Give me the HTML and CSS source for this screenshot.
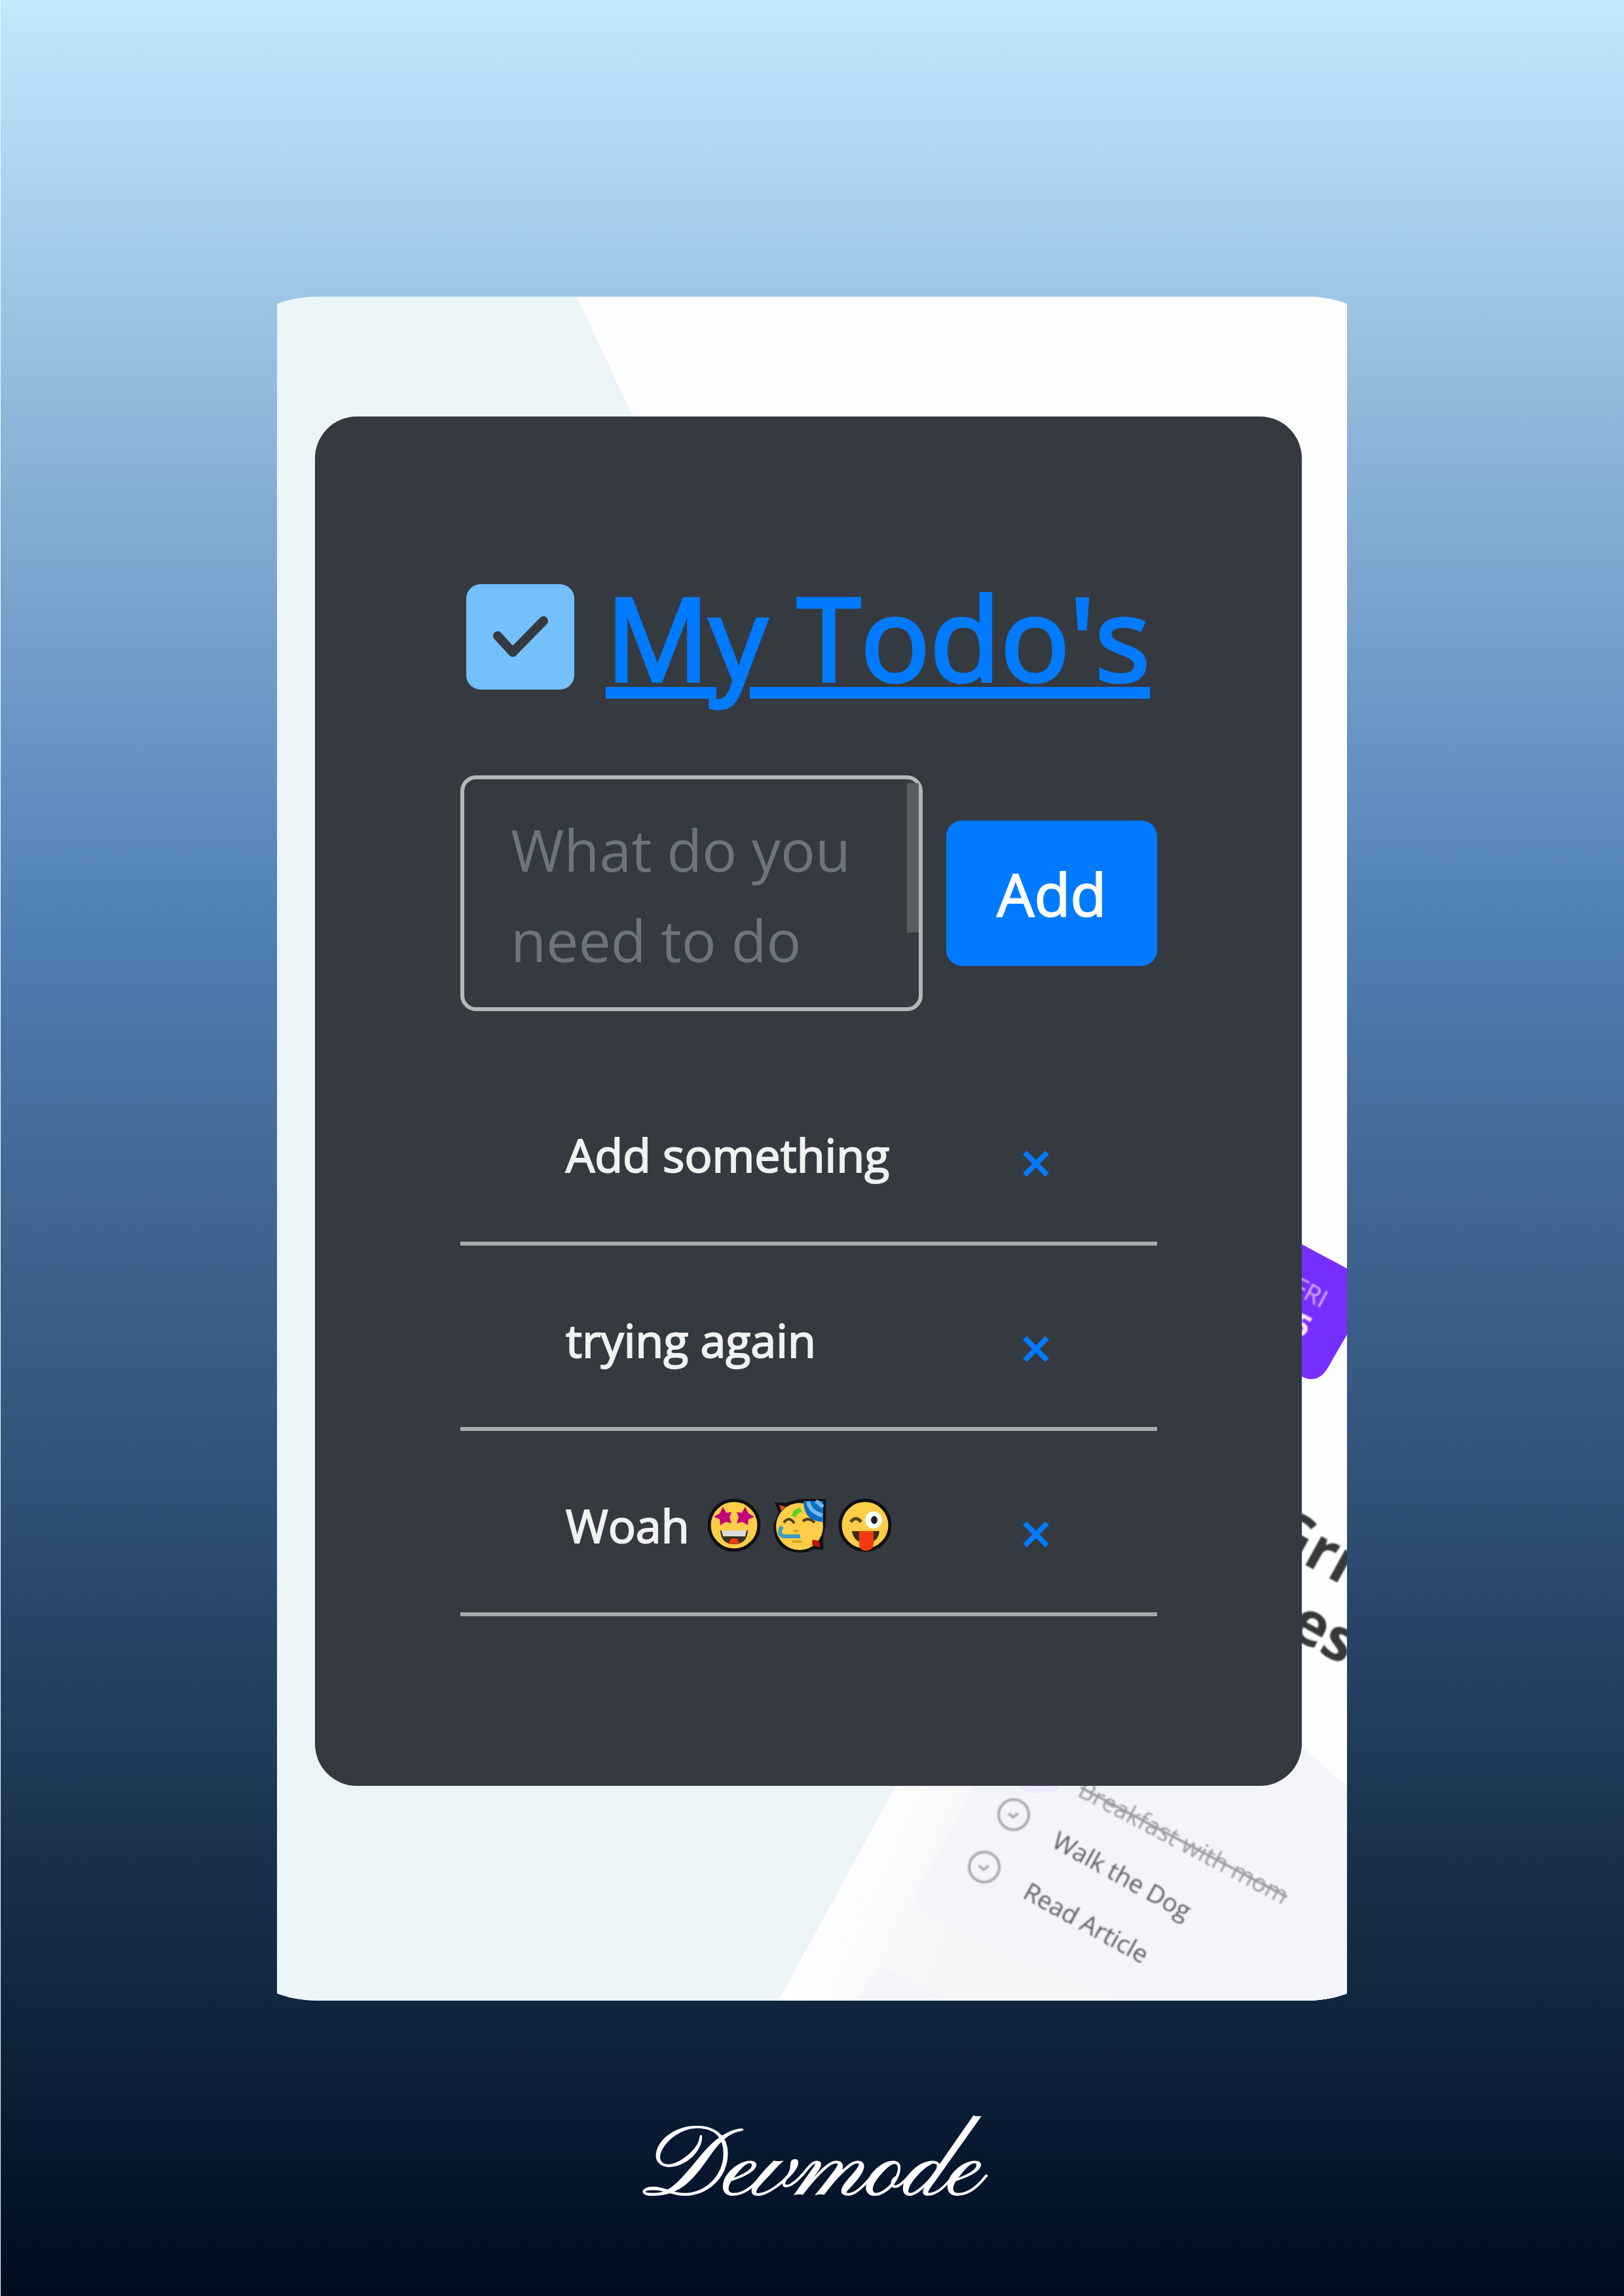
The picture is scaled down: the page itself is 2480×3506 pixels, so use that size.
FILE: index.html
```html
<!DOCTYPE html>
<html lang="en">
<head>
<meta charset="utf-8">
<meta name="viewport" content="width=device-width, initial-scale=1">
<title>My Todo's</title>
<link rel="stylesheet" href="styles.css">
</head>
<body>
<div class="poster">
  <div class="frame">
    <div class="backdrop" aria-hidden="true">
      <svg class="scene" viewBox="0 0 1634 2602" preserveAspectRatio="xMaxYMax slice">
        <defs>
          <linearGradient id="sheet" gradientUnits="userSpaceOnUse" x1="880" y1="2330" x2="1060" y2="2410">
            <stop offset="0" stop-color="#ffffff"/>
            <stop offset="0.5" stop-color="#fafafa"/>
            <stop offset="1" stop-color="#f6f6f9"/>
          </linearGradient>
          <filter id="soft"><feGaussianBlur stdDeviation="1"/></filter>
        </defs>
        <path fill="#ebf4f7" d="M0 0H1634V2602H0Z"/>
        <path fill="#fefefe" d="M458 0H1634V2602H766L945 2274 1100 1900 1100 1380Z"/>
        <path fill="url(#sheet)" d="M945 2274H1634V2602H766Z"/>
        <path fill="#f4f5fa" d="M1066 2274H1500L1566 2215 1634 2275V2602H1300L990 2470Q970 2455 980 2430Z"/>
        <path fill="#f4f5f9" d="M925 2550L1030 2602H880Z"/>
        <ellipse cx="1163" cy="2276" rx="30" ry="9" fill="#efeafb"/>
        <path fill="#772fff" d="M1500 1415L1565 1447 1634 1484V1585L1609 1628Q1597 1653 1580 1653 1572 1653 1565 1649L1500 1610Z"/>
        <g filter="url(#soft)">
          <text class="scene-day" transform="translate(1548 1520) rotate(28)">FRI</text>
          <text class="scene-date" transform="translate(1546 1579) rotate(28)">5</text>
          <text class="scene-title" transform="translate(1506 1901) rotate(29)">Gri</text>
          <text class="scene-title" transform="translate(1541 2042) rotate(29)">es</text>
          <text class="scene-item scene-item-done" text-anchor="end" transform="translate(1536 2456) rotate(28)">Breakfast with mom</text>
          <text class="scene-item" transform="translate(1181 2366) rotate(29)">Walk the Dog</text>
          <text class="scene-item" transform="translate(1137 2444) rotate(29)">Read Article</text>
          <g fill="none" stroke="#a9a9ad" stroke-width="4">
            <circle cx="1125" cy="2318" r="23"/>
            <path d="M1117 2316L1124 2322 1132 2316"/>
            <circle cx="1080" cy="2398" r="23"/>
            <path d="M1072 2396L1079 2402 1087 2396"/>
          </g>
        </g>
      </svg>
    </div>

    <main class="card">
      <header class="heading">
        <svg class="heading-icon" viewBox="0 0 165 161" aria-hidden="true">
          <rect width="165" height="161" rx="22" fill="#74c0fc"/>
          <path d="M48 79L71 104 118 56" fill="none" stroke="#353a41" stroke-width="14" stroke-linecap="round" stroke-linejoin="round"/>
        </svg>
        <h1 class="title">My Todo's</h1>
      </header>

      <form class="entry">
        <div class="field">
          <textarea class="field-input" aria-label="New todo" placeholder="What do you need to do"></textarea>
          <span class="field-thumb"></span>
        </div>
        <button class="add" type="button">Add</button>
      </form>

      <ul class="todos">
        <li class="todo">
          <span class="todo-text">Add something</span>
          <button class="remove" type="button" aria-label="Remove Add something"><svg viewBox="0 0 42 42"><path d="M4 4L38 38M38 4L4 38"/></svg></button>
        </li>
        <li class="todo">
          <span class="todo-text">trying again</span>
          <button class="remove" type="button" aria-label="Remove trying again"><svg viewBox="0 0 42 42"><path d="M4 4L38 38M38 4L4 38"/></svg></button>
        </li>
        <li class="todo">
          <span class="todo-text">Woah
            <span class="faces">
              <svg class="face" viewBox="0 0 80 80" role="img" aria-label="star-struck">
                <circle cx="40" cy="40" r="38" fill="#ffcd48" stroke="#111" stroke-width="5"/>
                <path fill="#c4007b" d="M23 12L28 21 36 20 33 28 36 37 27 35 19 40 18 31 9 27 18 22ZM57 12L62 22 71 27 62 31 61 40 53 35 44 37 47 28 44 20 52 21Z"/>
                <path fill="#3a3020" d="M19 48H61Q60 69 40 69 20 69 19 48Z"/>
                <path fill="#dcdcdc" d="M21 48H59L57 57H23Z"/>
                <path fill="#ef3a10" d="M32 67Q34 60 40 60 46 60 48 67 40 70 32 67Z"/>
              </svg>
              <svg class="face" viewBox="0 0 80 80" role="img" aria-label="partying">
                <path fill="#111" d="M2 5L18 6 40 0H80V40L76 58V77H62Q52 82 40 82 0 80 0 40L8 20Z"/>
                <circle cx="40" cy="42" r="36" fill="#ffcd48"/>
                <path fill="#0f6fc0" d="M46 3H76V35Q46 34 46 3Z"/>
                <path fill="none" stroke="#72b6f2" stroke-width="6" d="M53 4Q56 20 75 25M65 3L76 12"/>
                <path fill="none" stroke="#4e4020" stroke-width="4" d="M16 36Q24 25 32 37M45 34Q53 27 63 36"/>
                <path fill="none" stroke="#62d321" stroke-width="7" d="M31 27L34 20 42 16"/>
                <path fill="none" stroke="#3d9bc5" stroke-width="6" d="M13 42Q6 55 16 57H41"/>
                <path fill="#d9a51e" d="M31 47H38V51H31ZM29 63H44V67H29Z"/>
                <path fill="#e0531b" d="M9 9L19 12 12 18Z"/>
                <path fill="#c41219" d="M60 62L70 64 71 74 59 70Z"/>
              </svg>
              <svg class="face" viewBox="0 0 80 80" role="img" aria-label="winking with tongue out">
                <circle cx="40" cy="40" r="38" fill="#ffcd48" stroke="#111" stroke-width="5"/>
                <path fill="none" stroke="#5a4a20" stroke-width="5" d="M18 35Q26 25 34 35"/>
                <circle cx="53" cy="32" r="13" fill="#fff"/>
                <ellipse cx="54" cy="32" rx="5" ry="6" fill="#222"/>
                <path fill="#3a2a18" d="M20 49H62Q60 67 41 67 23 67 20 49Z"/>
                <path fill="#ef3a10" d="M31 49H53V68Q52 79 42 79 32 79 31 70Z"/>
              </svg>
            </span>
          </span>
          <button class="remove" type="button" aria-label="Remove Woah"><svg viewBox="0 0 42 42"><path d="M4 4L38 38M38 4L4 38"/></svg></button>
        </li>
      </ul>
    </main>
  </div>
  <footer class="signature">Devmode</footer>
</div>
</body>
</html>
```
FILE: styles.css
```css
* {
  box-sizing: border-box;
}

body {
  margin: 0;
  font-family: "Open Sans", "Noto Sans", sans-serif;
}

.poster {
  min-height: 100vh;
  padding: 453px 25px 0 24px;
  border-left: 1px solid #f4f8fb;
  background: linear-gradient(
    #c2e8ff 0%,
    #a2caea 11%,
    #8bb5d8 19%,
    #5f8dbf 35%,
    #4f7eb2 41%,
    #416793 52%,
    #30547a 64%,
    #28466a 70%,
    #203c5a 76%,
    #182e4a 82%,
    #0f233b 89%,
    #03132a 96%,
    #000d20 100%
  );
}

.frame {
  position: relative;
  max-width: 1634px;
  margin: 0 auto;
  padding: 183px 69px 328px 58px;
  overflow: hidden;
}

/* wider than the frame, so only the start of each corner curve shows */
.backdrop {
  position: absolute;
  inset: 0 -120px;
  padding: 0 120px;
  overflow: hidden;
  border-radius: 182px;
  background: linear-gradient(90deg, #ebf4f7 50%, #f4f5fa 50%);
}

.scene {
  display: block;
  width: 100%;
  height: 100%;
}

.scene-day {
  font-size: 38px;
  fill: #d4b4ff;
}

.scene-date {
  font-size: 46px;
  font-weight: 700;
  fill: #ffe3f4;
}

.scene-title {
  font-size: 92px;
  font-weight: 700;
  fill: #38393b;
}

.scene-item {
  font-size: 38px;
  fill: #5f6065;
}

.scene-item-done {
  fill: #9c9da2;
  text-decoration: line-through;
}

.card {
  position: relative;
  padding: 228px 221px 259px 222px;
  border-radius: 64px;
  background: #353a41;
  color: #f1f1f1;
}

.heading {
  display: flex;
  align-items: center;
  gap: 48px;
  padding-left: 9px;
}

.heading-icon {
  flex: none;
  width: 165px;
  height: 161px;
}

.title {
  margin: 0;
  font-size: 176px;
  font-weight: 400;
  line-height: 216px;
  white-space: nowrap;
  color: #007bff;
  -webkit-text-stroke: 5px #007bff;
  text-decoration: underline;
  text-decoration-thickness: 18px;
  text-underline-offset: 9px;
}

.entry {
  display: flex;
  align-items: center;
  gap: 36px;
  margin-top: 104px;
}

.field {
  position: relative;
  flex: 1;
  height: 360px;
}

.field-input {
  display: block;
  width: 100%;
  height: 100%;
  padding: 38px 80px 0 71px;
  border: 6px solid #b4b7b9;
  border-radius: 24px;
  background: transparent;
  color: #f1f1f1;
  font: inherit;
  font-size: 88px;
  line-height: 138px;
  resize: none;
  overflow: hidden;
}

.field-input::placeholder {
  color: #6c757d;
  opacity: 1;
}

.field-thumb {
  position: absolute;
  top: 12px;
  right: 6px;
  width: 18px;
  height: 228px;
  background: #5a5c5e;
}

.add {
  flex: none;
  width: 322px;
  height: 222px;
  padding: 0;
  border: 0;
  border-radius: 24px;
  background: #007bff;
  color: #fff;
  font: inherit;
  font-size: 90px;
  line-height: 138px;
  -webkit-text-stroke: 2px #fff;
}

.todos {
  margin: 75px 0 0;
  padding: 0;
  list-style: none;
}

.todo {
  display: flex;
  align-items: center;
  justify-content: space-between;
  height: 283px;
  padding: 10px 164px 0 161px;
  border-bottom: 6px solid #a8aaad;
}

.todo-text {
  display: flex;
  align-items: center;
  gap: 28px;
  font-size: 70px;
  line-height: 106px;
  white-space: nowrap;
  -webkit-text-stroke: 2px #f1f1f1;
}

.faces {
  display: flex;
  gap: 20px;
}

.face {
  width: 80px;
  height: 80px;
  overflow: visible;
}

.remove {
  width: 42px;
  height: 42px;
  margin-top: 28px;
  padding: 0;
  border: 0;
  background: none;
}

.remove svg {
  display: block;
  width: 42px;
  height: 42px;
  fill: none;
  stroke: #007bff;
  stroke-width: 8px;
}

.signature {
  padding: 180px 0 80px;
  font-family: "Pinyon Script", "Liberation Serif", serif;
  font-size: 154px;
  line-height: 160px;
  text-align: center;
  color: #fff;
  -webkit-text-stroke: 2px #fff;
}
```
